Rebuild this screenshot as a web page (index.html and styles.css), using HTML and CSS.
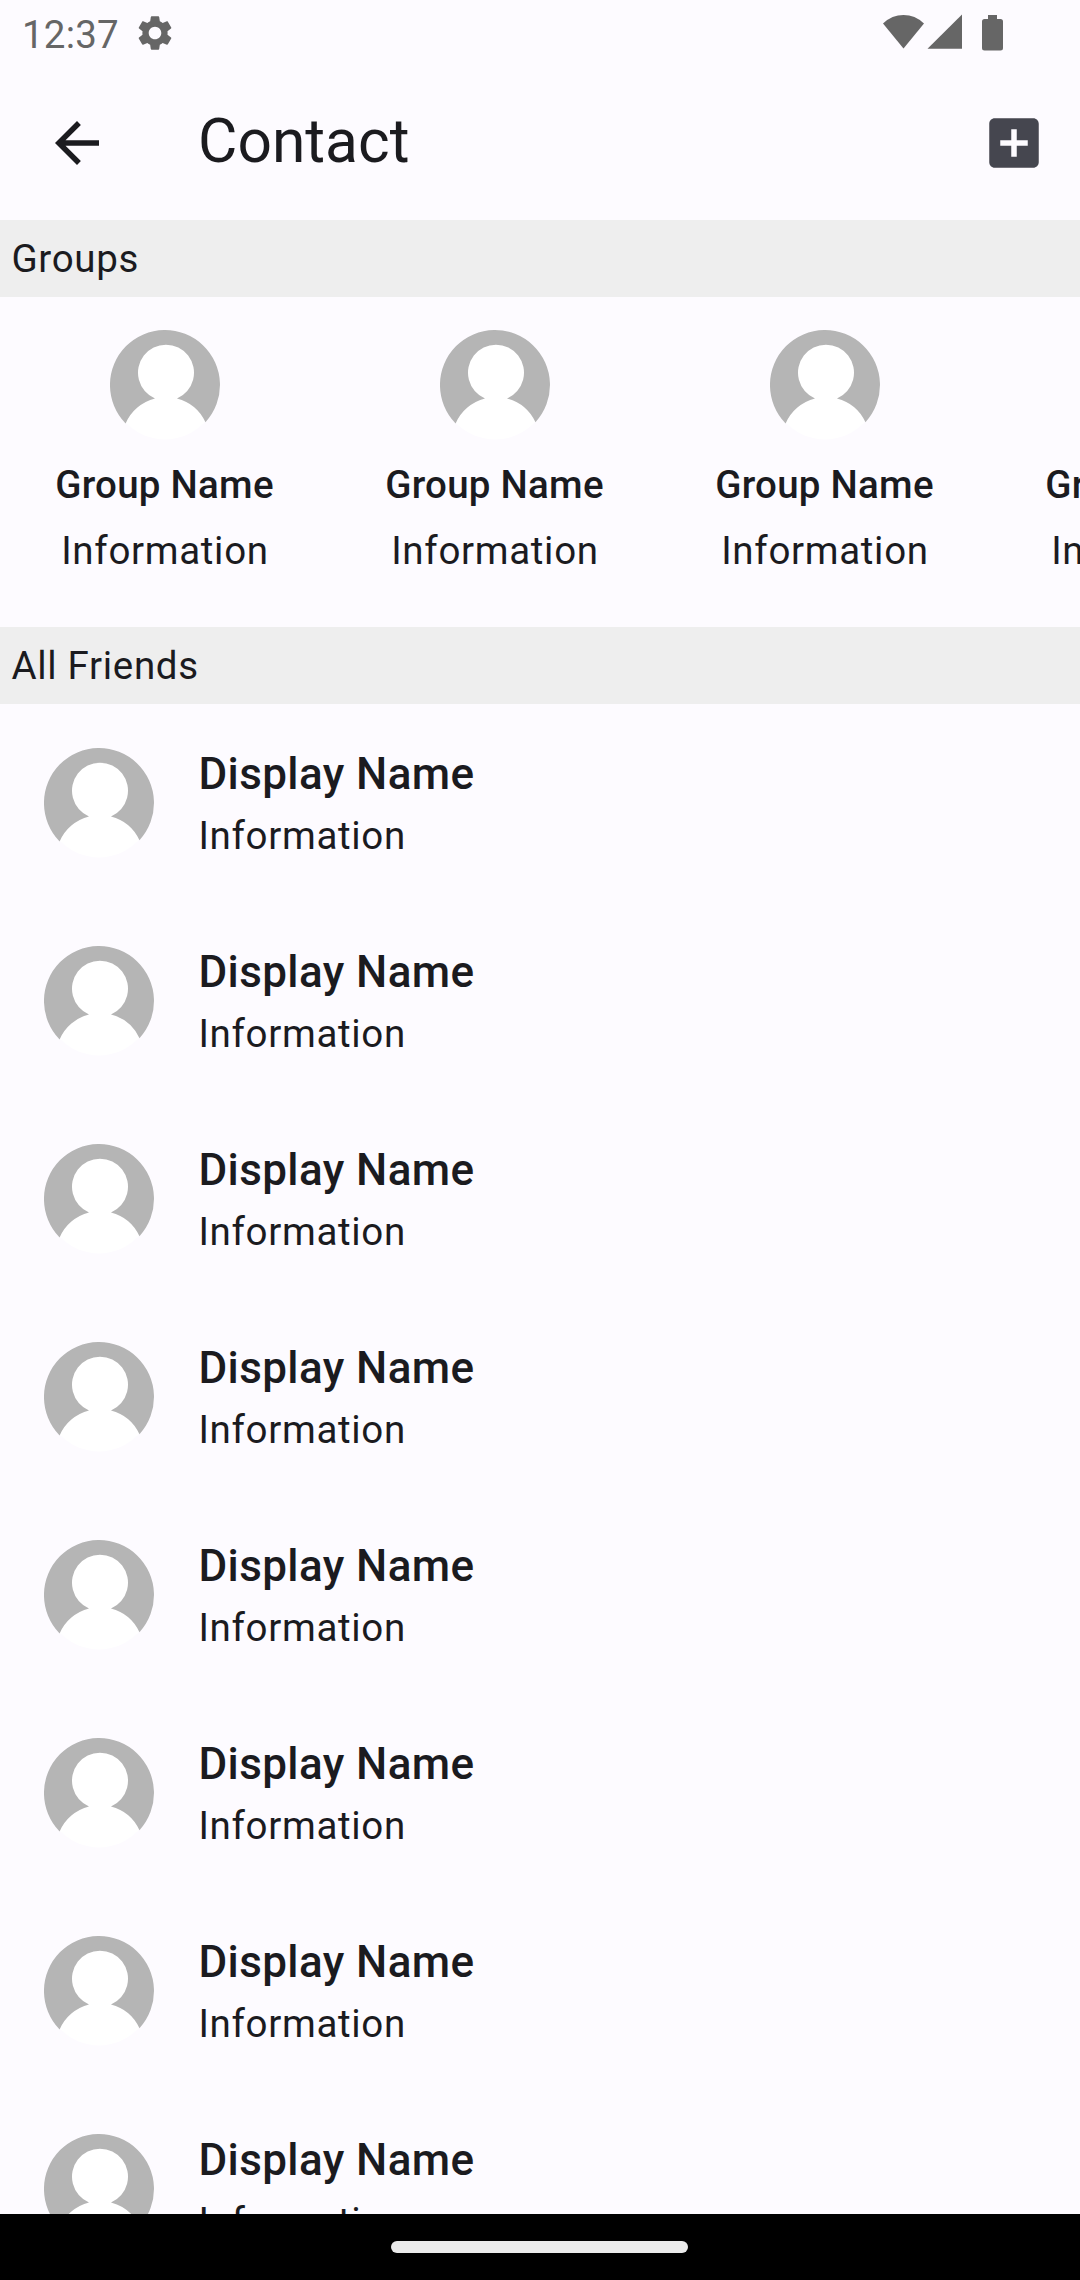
FILE: index.html
```html
<!DOCTYPE html>
<html lang="en">
<head>
<meta charset="utf-8">
<title>Contact</title>
<link rel="stylesheet" href="styles.css">
</head>
<body>
<svg class="defs" width="0" height="0" aria-hidden="true">
  <defs>
    <symbol id="avatar" viewBox="0 0 110 110">
      <circle cx="55" cy="55" r="54.500" fill="#fff"/>
      <path fill="#b5b5b5" d="M15.600 93.400A55 55 0 1 1 95.500 92.200A43.800 43.800 0 0 0 67 68.400A28 28 0 1 0 45 68.400A43.800 43.800 0 0 0 15.600 93.400Z"/>
    </symbol>
  </defs>
</svg>
<div class="screen">
  <header class="status">
    <span class="time">12:37</span>
    <svg class="gear" viewBox="0 0 24 24"><path d="M19.14 12.94c.04-.3.06-.61.06-.94 0-.32-.02-.64-.07-.94l2.03-1.58c.18-.14.23-.41.12-.61l-1.92-3.32c-.12-.22-.37-.29-.59-.22l-2.39.96c-.5-.38-1.03-.7-1.62-.94l-.36-2.54c-.04-.24-.24-.41-.48-.41h-3.84c-.24 0-.43.17-.47.41l-.36 2.54c-.59.24-1.13.57-1.62.94l-2.39-.96c-.22-.08-.47 0-.59.22L2.74 8.87c-.12.21-.08.47.12.61l2.03 1.58c-.05.3-.09.63-.09.94s.02.64.07.94l-2.03 1.58c-.18.14-.23.41-.12.61l1.92 3.32c.12.22.37.29.59.22l2.39-.96c.5.38 1.03.7 1.62.94l.36 2.54c.05.24.24.41.48.41h3.84c.24 0 .44-.17.47-.41l.36-2.54c.59-.24 1.13-.56 1.62-.94l2.39.96c.22.08.47 0 .59-.22l1.92-3.32c.12-.22.07-.47-.12-.61l-2.01-1.58zM12 15.6c-1.98 0-3.6-1.62-3.6-3.6s1.62-3.6 3.6-3.6 3.6 1.62 3.6 3.6-1.62 3.6-3.6 3.6z"/></svg>
    <svg class="signals" viewBox="0 0 121 37">
      <path d="M20.5 34.5 0 9.4Q9 1 20.5 1T41 9.4Z"/>
      <path d="M44.5 34.7 79 .5V34.7Z"/>
      <path d="M105 5V1h9v4h3.500q2.500 0 2.500 2.500V34q0 2.500-2.500 2.500H101.500q-2.500 0-2.500-2.500V7.500q0-2.500 2.500-2.500Z"/>
    </svg>
  </header>
  <nav class="appbar">
    <svg class="icon back" viewBox="0 0 24 24"><path d="M20 11H7.830l5.590-5.590L12 4l-8 8 8 8 1.410-1.410L7.830 13H20v-2z"/></svg>
    <h1 class="title">Contact</h1>
    <svg class="icon add" viewBox="0 0 24 24"><path d="M19 3H5c-1.110 0-2 .9-2 2v14c0 1.100.89 2 2 2h14c1.100 0 2-.9 2-2V5c0-1.100-.9-2-2-2zm-2 10h-4v4h-2v-4H7v-2h4V7h2v4h4v2z"/></svg>
  </nav>
  <h2 class="section">Groups</h2>
  <div class="groups">
    <div class="group"><svg class="avatar"><use href="#avatar"/></svg><div class="group-name">Group Name</div><div class="info">Information</div></div>
    <div class="group"><svg class="avatar"><use href="#avatar"/></svg><div class="group-name">Group Name</div><div class="info">Information</div></div>
    <div class="group"><svg class="avatar"><use href="#avatar"/></svg><div class="group-name">Group Name</div><div class="info">Information</div></div>
    <div class="group"><svg class="avatar"><use href="#avatar"/></svg><div class="group-name">Group Name</div><div class="info">Information</div></div>
  </div>
  <h2 class="section">All Friends</h2>
  <div class="friends">
    <div class="friend"><svg class="avatar"><use href="#avatar"/></svg><div class="friend-text"><div class="name">Display Name</div><div class="info">Information</div></div></div>
    <div class="friend"><svg class="avatar"><use href="#avatar"/></svg><div class="friend-text"><div class="name">Display Name</div><div class="info">Information</div></div></div>
    <div class="friend"><svg class="avatar"><use href="#avatar"/></svg><div class="friend-text"><div class="name">Display Name</div><div class="info">Information</div></div></div>
    <div class="friend"><svg class="avatar"><use href="#avatar"/></svg><div class="friend-text"><div class="name">Display Name</div><div class="info">Information</div></div></div>
    <div class="friend"><svg class="avatar"><use href="#avatar"/></svg><div class="friend-text"><div class="name">Display Name</div><div class="info">Information</div></div></div>
    <div class="friend"><svg class="avatar"><use href="#avatar"/></svg><div class="friend-text"><div class="name">Display Name</div><div class="info">Information</div></div></div>
    <div class="friend"><svg class="avatar"><use href="#avatar"/></svg><div class="friend-text"><div class="name">Display Name</div><div class="info">Information</div></div></div>
    <div class="friend"><svg class="avatar"><use href="#avatar"/></svg><div class="friend-text"><div class="name">Display Name</div><div class="info">Information</div></div></div>
  </div>
  <footer class="navbar"><div class="handle"></div></footer>
</div>
</body>
</html>
```
FILE: styles.css
```css
* { box-sizing: border-box; margin: 0; }
body { font-family: Roboto, sans-serif; color: #1b1b1f; background: #fdfbff; }
.defs { display: block; height: 0; }
.screen { width: 1080px; height: 2280px; display: flex; flex-direction: column; overflow: hidden; background: #fdfbff; }
.screen > * { flex-shrink: 0; }
svg { display: block; flex-shrink: 0; }

.status { height: 66px; display: flex; align-items: flex-start; padding: 0 76px 0 22px; color: #666; fill: #666; }
.time { font-size: 38.5px; line-height: 45px; letter-spacing: .2px; padding-top: 12px; width: 112px; }
.gear { width: 42px; height: 42px; margin-top: 12px; }
.signals { width: 121px; height: 37px; margin: 14px 0 0 auto; }

.appbar { height: 154px; display: flex; align-items: center; padding: 0 33px 0 44px; }
.icon { width: 66px; height: 66px; }
.back { fill: #1b1b1f; }
.add { fill: #45464f; margin-left: auto; }
.title { margin-left: 88px; font-size: 60.5px; line-height: 77px; font-weight: 400; padding-bottom: 3px; }

.section { height: 77px; padding: 11px 11px 11px 11.4px; background: #eee; font-size: 38.5px; line-height: 55px; font-weight: 400; letter-spacing: .6875px; }

.groups { height: 330px; display: flex; padding-top: 33px; overflow: hidden; }
.group { width: 330px; flex-shrink: 0; display: flex; flex-direction: column; align-items: center; }
.avatar { width: 110px; height: 110px; }
.group-name { margin: 17px 0 11px; padding-right: 1px; font-size: 38.5px; line-height: 55px; font-weight: 500; letter-spacing: .25px; }
.info { font-size: 38.5px; line-height: 55px; letter-spacing: .6875px; }

.friends { flex: 1 1 0; min-height: 0; overflow: hidden; }
.friend { height: 198px; display: flex; align-items: center; gap: 44px; padding: 0 44px; }
.friend-text { padding: 0 0 2px .4px; }
.name { font-size: 44px; line-height: 66px; margin-bottom: 1px; font-weight: 500; letter-spacing: .4125px; }

.navbar { height: 66px; background: #000; display: flex; align-items: center; justify-content: center; padding-right: 1px; }
.handle { width: 297px; height: 12px; border-radius: 6px; background: #ebebeb; }
```
